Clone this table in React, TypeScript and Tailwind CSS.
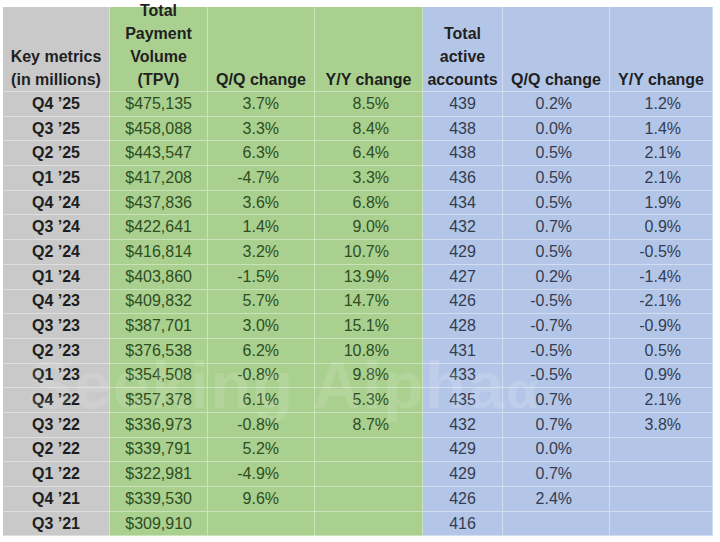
import React from "react";

type Row = [string, string, string, string, string, string, string];

const rows: Row[] = [
  ["Q4 ’25", "$475,135", "3.7%", "8.5%", "439", "0.2%", "1.2%"],
  ["Q3 ’25", "$458,088", "3.3%", "8.4%", "438", "0.0%", "1.4%"],
  ["Q2 ’25", "$443,547", "6.3%", "6.4%", "438", "0.5%", "2.1%"],
  ["Q1 ’25", "$417,208", "-4.7%", "3.3%", "436", "0.5%", "2.1%"],
  ["Q4 ’24", "$437,836", "3.6%", "6.8%", "434", "0.5%", "1.9%"],
  ["Q3 ’24", "$422,641", "1.4%", "9.0%", "432", "0.7%", "0.9%"],
  ["Q2 ’24", "$416,814", "3.2%", "10.7%", "429", "0.5%", "-0.5%"],
  ["Q1 ’24", "$403,860", "-1.5%", "13.9%", "427", "0.2%", "-1.4%"],
  ["Q4 ’23", "$409,832", "5.7%", "14.7%", "426", "-0.5%", "-2.1%"],
  ["Q3 ’23", "$387,701", "3.0%", "15.1%", "428", "-0.7%", "-0.9%"],
  ["Q2 ’23", "$376,538", "6.2%", "10.8%", "431", "-0.5%", "0.5%"],
  ["Q1 ’23", "$354,508", "-0.8%", "9.8%", "433", "-0.5%", "0.9%"],
  ["Q4 ’22", "$357,378", "6.1%", "5.3%", "435", "0.7%", "2.1%"],
  ["Q3 ’22", "$336,973", "-0.8%", "8.7%", "432", "0.7%", "3.8%"],
  ["Q2 ’22", "$339,791", "5.2%", "", "429", "0.0%", ""],
  ["Q1 ’22", "$322,981", "-4.9%", "", "429", "0.7%", ""],
  ["Q4 ’21", "$339,530", "9.6%", "", "426", "2.4%", ""],
  ["Q3 ’21", "$309,910", "", "", "416", "", ""],
];

const cellBg = [
  "bg-[#c9c9c9]",
  "bg-[#a9d08e]",
  "bg-[#a9d08e]",
  "bg-[#a9d08e]",
  "bg-[#b4c6e7]",
  "bg-[#b4c6e7]",
  "bg-[#b4c6e7]",
];

const dataText = [
  "justify-center font-bold text-[#1e1e1e]",
  "justify-end pr-[15px] text-[#2f4d22]",
  "justify-end pr-[35px] text-[#2f4d22]",
  "justify-end pr-[33px] text-[#2f4d22]",
  "justify-center text-[#333c52]",
  "justify-end pr-[37px] text-[#333c52]",
  "justify-end pr-[31px] text-[#333c52]",
];

const headers: string[][] = [
  ["Key metrics", "(in millions)"],
  ["Total", "Payment", "Volume", "(TPV)"],
  ["Q/Q change"],
  ["Y/Y change"],
  ["Total", "active", "accounts"],
  ["Q/Q change"],
  ["Y/Y change"],
];

export default function App() {
  return (
    <div
      className="relative h-[542px] w-[720px] overflow-hidden bg-white pl-[3px] pt-[7px]"
      style={{ fontFamily: '"Liberation Sans", Arial, sans-serif' }}
    >
      <div className="grid grid-cols-[107px_98px_107px_108px_80px_107px_103px] grid-rows-[85px_repeat(18,24.7px)]">
        {headers.map((lines, i) => (
          <div
            key={`h${i}`}
            className={`${cellBg[i]} flex flex-col items-center justify-end border-b border-r border-white/40 text-center text-[16px] font-bold leading-[23px] text-[#1f1f1f]`}
          >
            {lines.map((l) => (
              <span key={l} className="whitespace-nowrap">
                {l}
              </span>
            ))}
          </div>
        ))}
        {rows.map((row) =>
          row.map((v, i) => (
            <div
              key={`${row[0]}-${i}`}
              className={`${cellBg[i]} ${dataText[i]} flex items-center border-b border-r border-white/40 text-[16px] leading-none`}
            >
              {v}
            </div>
          ))
        )}
      </div>

      {/* faint watermark */}
      <div className="pointer-events-none absolute left-[28px] top-[336px] select-none whitespace-nowrap text-[66px] font-bold tracking-[2px] text-white/[0.12]">
        Seeking Alpha<span className="text-[52px]">α</span>
      </div>
    </div>
  );
}
